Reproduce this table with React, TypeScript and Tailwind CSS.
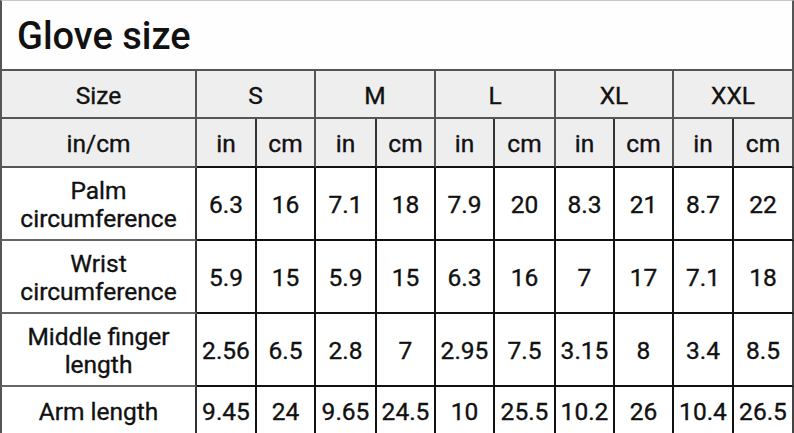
const sizes = ["S", "M", "L", "XL", "XXL"];

const rows: { label: string[]; values: string[] }[] = [
  {
    label: ["Palm", "circumference"],
    values: ["6.3", "16", "7.1", "18", "7.9", "20", "8.3", "21", "8.7", "22"],
  },
  {
    label: ["Wrist", "circumference"],
    values: ["5.9", "15", "5.9", "15", "6.3", "16", "7", "17", "7.1", "18"],
  },
  {
    label: ["Middle finger", "length"],
    values: ["2.56", "6.5", "2.8", "7", "2.95", "7.5", "3.15", "8", "3.4", "8.5"],
  },
  {
    label: ["Arm length"],
    values: ["9.45", "24", "9.65", "24.5", "10", "25.5", "10.2", "26", "10.4", "26.5"],
  },
];

const cell = "flex items-center justify-center pt-[3px] text-center";

export default function App() {
  return (
    <main
      className="h-[433px] w-[794px] overflow-hidden bg-white text-[24.5px] leading-[28px] text-[#111] [-webkit-text-stroke:0.35px_#111]"
      style={{ fontFamily: "Roboto, 'Liberation Sans', sans-serif" }}
    >
      <div className="grid grid-cols-[197px_60px_59px_61px_59px_59px_61px_59px_59px_60px_60px] grid-rows-[71px_48px_49px_73px_73px_73px_48px]">
        {/* title */}
        <div className="col-span-11 flex items-center border-t border-r-2 border-b-2 border-l-2 border-t-[#c9c9c9] border-r-[#555] border-b-[#555] border-l-[#555] bg-[#fefefe] pt-[2px] pl-[15px] text-[38px] font-medium text-[#111] [-webkit-text-stroke:0px]">
          Glove size
        </div>

        {/* size row */}
        <div className={`${cell} border-r-2 border-b-2 border-l-2 border-[#555] bg-[#eeeeee]`}>
          Size
        </div>
        {sizes.map((s) => (
          <div
            key={s}
            className={`${cell} col-span-2 border-r-2 border-b-2 border-[#555] bg-[#eeeeee]`}
          >
            {s}
          </div>
        ))}

        {/* unit row */}
        <div className={`${cell} border-r-2 border-b-2 border-l-2 border-[#555] bg-[#eeeeee]`}>
          in/cm
        </div>
        {sizes.map((s) => [
          <div
            key={s + "in"}
            className={`${cell} border-r-2 border-b-2 border-r-[#333] border-b-[#111] bg-[#eeeeee]`}
          >
            in
          </div>,
          <div
            key={s + "cm"}
            className={`${cell} border-r-2 border-b-2 border-r-[#555] border-b-[#111] bg-[#eeeeee]`}
          >
            cm
          </div>,
        ])}

        {/* data rows */}
        {rows.map((row) => [
          <div
            key={row.label.join()}
            className={`${cell} flex-col border-r-2 border-b-2 border-l-2 border-r-[#333] border-b-[#666] border-l-[#555] bg-white`}
          >
            {row.label.map((l) => (
              <span key={l}>{l}</span>
            ))}
          </div>,
          ...row.values.map((v, i) => (
            <div
              key={row.label.join() + i}
              className={`${cell} border-r-2 border-b-2 border-b-[#111] bg-white ${
                i === 9 ? "border-r-[#444]" : "border-r-[#111]"
              }`}
            >
              {v}
            </div>
          )),
        ])}
      </div>
    </main>
  );
}
